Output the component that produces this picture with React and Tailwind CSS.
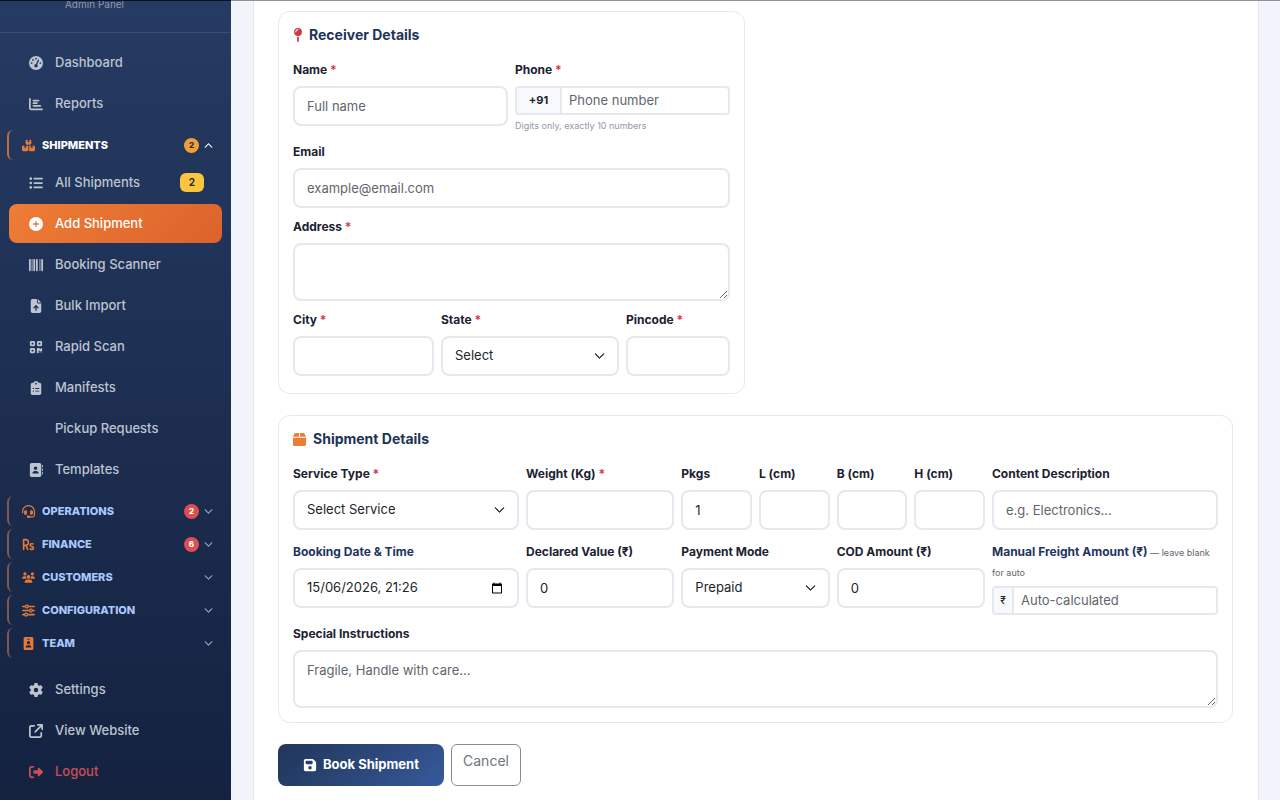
import React from 'react';
import {
  FaGaugeHigh,
  FaChartBar,
  FaBoxesStacked,
  FaListUl,
  FaCirclePlus,
  FaBarcode,
  FaFileArrowUp,
  FaQrcode,
  FaClipboardList,
  FaAddressBook,
  FaHeadset,
  FaRupeeSign,
  FaUsers,
  FaSliders,
  FaIdBadge,
  FaGear,
  FaArrowUpRightFromSquare,
  FaRightFromBracket,
  FaMapPin,
  FaBox,
  FaFloppyDisk,
} from 'react-icons/fa6';
import { BsChevronDown, BsChevronUp } from 'react-icons/bs';

const mainLinks = [
  { label: 'Dashboard', icon: FaGaugeHigh },
  { label: 'Reports', icon: FaChartBar },
];

const shipmentLinks = [
  { label: 'All Shipments', icon: FaListUl, badge: 2 },
  { label: 'Add Shipment', icon: FaCirclePlus, active: true },
  { label: 'Booking Scanner', icon: FaBarcode },
  { label: 'Bulk Import', icon: FaFileArrowUp },
  { label: 'Rapid Scan', icon: FaQrcode },
  { label: 'Manifests', icon: FaClipboardList },
  { label: 'Pickup Requests' },
  { label: 'Templates', icon: FaAddressBook },
];

const sections = [
  { label: 'Operations', icon: FaHeadset, count: 2 },
  { label: 'Finance', icon: FaRupeeSign, count: 6 },
  { label: 'Customers', icon: FaUsers },
  { label: 'Configuration', icon: FaSliders },
  { label: 'Team', icon: FaIdBadge },
];

const footerLinks = [
  { label: 'Settings', icon: FaGear },
  { label: 'View Website', icon: FaArrowUpRightFromSquare },
  { label: 'Logout', icon: FaRightFromBracket, danger: true },
];

function NavLink({ label, icon: Icon, badge, active, danger }) {
  let color = 'text-[#bdc4d0]';
  if (active) color = 'text-white bg-linear-135 from-[#ee7d36] to-[#dc622b]';
  if (danger) color = 'text-[#c94f55]';

  return (
    <li>
      <a
        href="#"
        aria-current={active ? 'page' : undefined}
        className={`flex items-center h-[39px] pl-[19px] pr-[18px] rounded-lg text-[13px] font-medium ${color}`}
      >
        <span className="w-[15px] mr-3 flex justify-center">{Icon && <Icon size={14} />}</span>
        <span className="flex-1">{label}</span>
        {badge && (
          <span className="w-6 h-[19px] rounded-md bg-[#fbc53d] text-[#1f2937] text-[10px] font-bold flex items-center justify-center">
            {badge}
          </span>
        )}
      </a>
    </li>
  );
}

function SectionButton({ label, icon: Icon, count, open }) {
  const Chevron = open ? BsChevronUp : BsChevronDown;

  return (
    <button
      type="button"
      aria-expanded={!!open}
      className={`flex items-center w-full h-[30px] pl-3 pr-[11px] border-l-2 rounded-md text-[11px] font-extrabold uppercase ${
        open ? 'text-white border-[#c06c45]' : 'text-[#a9c8fb] border-[#7f5650]'
      }`}
    >
      <span className="w-[14px] mr-[7px] flex justify-center text-[#e57a38]">
        <Icon size={13} />
      </span>
      <span className="flex-1 text-left">{label}</span>
      {count && (
        <span
          className={`w-[15px] h-[15px] mr-[5px] rounded-full flex items-center justify-center text-[8px] ${
            open ? 'bg-[#f0a136] text-[#1f2937]' : 'bg-[#dc4f53] text-white'
          }`}
        >
          {count}
        </span>
      )}
      <Chevron size={9} strokeWidth={1} className={open ? 'text-white' : 'text-[#a3adbf]'} />
    </button>
  );
}

function Sidebar() {
  return (
    <aside className="w-[231px] shrink-0 border-t border-black/50 bg-linear-to-b from-[#263b63] to-[#142240] overflow-hidden">
      <div className="h-8 pr-[42px] border-b border-white/10 text-center text-[10px] leading-[6px] text-[#8e99ad]">
        Admin Panel
      </div>
      <nav>
        <ul className="mt-[10px] mx-[9px] flex flex-col gap-[2px]">
          {mainLinks.map((link) => (
            <NavLink key={link.label} {...link} />
          ))}
        </ul>

        <div className="mt-[7px] mx-[7px]">
          <SectionButton label="Shipments" icon={FaBoxesStacked} count={2} open />
        </div>
        <ul className="mt-[3px] mx-[9px] flex flex-col gap-[2px]">
          {shipmentLinks.map((link) => (
            <NavLink key={link.label} {...link} />
          ))}
        </ul>

        <div className="mt-[7px] mx-[7px] flex flex-col gap-[3px]">
          {sections.map((section) => (
            <SectionButton key={section.label} {...section} />
          ))}
        </div>

        <ul className="mt-3 mx-[9px] flex flex-col gap-[2px]">
          {footerLinks.map((link) => (
            <NavLink key={link.label} {...link} />
          ))}
        </ul>
      </nav>
    </aside>
  );
}

const controlClass =
  'block w-full rounded-lg border-2 border-[#e6e8ee] bg-white px-3 text-[13px] text-[#212529] placeholder:text-[#5f666d] outline-none';

function Field({ id, label, required, accent, className, children }) {
  return (
    <div className={className}>
      <label
        htmlFor={id}
        className={`block mb-1.5 text-[12px] leading-5 font-bold whitespace-nowrap ${accent ? 'text-[#1e3560]' : 'text-[#1b2230]'}`}
      >
        {label}
        {required && <span className="text-[#dc3545]"> *</span>}
      </label>
      {children}
    </div>
  );
}

function TextField({ id, placeholder, defaultValue, ...field }) {
  return (
    <Field id={id} {...field}>
      <input id={id} type="text" placeholder={placeholder} defaultValue={defaultValue} className={`${controlClass} h-10`} />
    </Field>
  );
}

function SelectField({ id, options, ...field }) {
  return (
    <Field id={id} {...field}>
      <div className="relative">
        <select id={id} className={`${controlClass} h-10 appearance-none`}>
          {options.map((option) => (
            <option key={option}>{option}</option>
          ))}
        </select>
        <BsChevronDown
          size={11}
          strokeWidth={1}
          className="absolute right-[14px] top-1/2 -translate-y-1/2 pointer-events-none text-[#212529]"
        />
      </div>
    </Field>
  );
}

function TextareaField({ id, placeholder, ...field }) {
  return (
    <Field id={id} {...field}>
      <textarea id={id} placeholder={placeholder} className={`${controlClass} h-[58px] py-2 leading-5 resize-y`} />
    </Field>
  );
}

function InputGroup({ id, prefix, prefixClass, placeholder }) {
  return (
    <div className="flex h-[29px] rounded-sm border-2 border-[#e6e8ee] bg-white overflow-hidden">
      <span className={`flex items-center justify-center border-r-2 border-[#e6e8ee] bg-[#f8f9fc] text-[#212529] ${prefixClass}`}>
        {prefix}
      </span>
      <input
        id={id}
        type="text"
        placeholder={placeholder}
        className="flex-1 min-w-0 px-[7px] text-[13px] text-[#212529] placeholder:text-[#5f666d] outline-none"
      />
    </div>
  );
}

function CardTitle({ icon, children }) {
  return (
    <h2 className="flex items-center mb-4 text-[14px] leading-[18px] font-bold text-[#1e3358]">
      {icon}
      {children}
    </h2>
  );
}

function ReceiverCard() {
  return (
    <section className="w-[467px] rounded-xl border border-[#e6e8ee] px-[14px] pt-[14px] pb-[17px]">
      <CardTitle icon={<FaMapPin size={14} className="-ml-[2px] mr-1 text-[#d03a47]" />}>Receiver Details</CardTitle>
      <div className="grid grid-cols-12 gap-x-[7px] gap-y-[9px]">
        <TextField id="name" label="Name" required placeholder="Full name" className="col-span-6" />
        <Field id="phone" label="Phone" required className="col-span-6">
          <InputGroup id="phone" prefix="+91" prefixClass="w-[45px] text-[11px] font-bold" placeholder="Phone number" />
          <p className="mt-[3px] text-[9px] leading-[15px] text-[#9299a5]">Digits only, exactly 10 numbers</p>
        </Field>
        <TextField id="email" label="Email" placeholder="example@email.com" className="col-span-12" />
        <TextareaField id="address" label="Address" required className="col-span-12" />
        <TextField id="city" label="City" required className="col-span-4" />
        <SelectField id="state" label="State" required options={['Select']} className="col-span-5" />
        <TextField id="pincode" label="Pincode" required className="col-span-3" />
      </div>
    </section>
  );
}

function DateField() {
  return (
    <Field id="booking-date" label="Booking Date & Time" accent className="col-span-3">
      <div className={`${controlClass} flex items-center h-10`}>
        <input
          id="booking-date"
          type="text"
          defaultValue="15/06/2026, 21:26"
          className="flex-1 min-w-0 text-[13px] outline-none"
        />
        <button type="button" aria-label="Open calendar" className="mr-[2px]">
          <svg width="12" height="12" viewBox="0 0 24 24" fill="currentColor" className="text-black">
            <path d="M20 3h-1V1h-2v2H7V1H5v2H4c-1.1 0-2 .9-2 2v16c0 1.100.9 2 2 2h16c1.100 0 2-.9 2-2V5c0-1.100-.9-2-2-2zm0 18H4V8h16v13z" />
          </svg>
        </button>
      </div>
    </Field>
  );
}

function ShipmentCard() {
  return (
    <section className="mt-[21px] rounded-xl border border-[#e6e8ee] p-[14px]">
      <CardTitle icon={<FaBox size={15} className="-ml-px mr-1.5 text-[#e97e37]" />}>Shipment Details</CardTitle>
      <div className="flex flex-col gap-[9px]">
        <div className="grid grid-cols-12 gap-x-[7px]">
          <SelectField id="service" label="Service Type" required options={['Select Service']} className="col-span-3" />
          <TextField id="weight" label="Weight (Kg)" required className="col-span-2" />
          <TextField id="pkgs" label="Pkgs" defaultValue="1" />
          <TextField id="length" label="L (cm)" />
          <TextField id="breadth" label="B (cm)" />
          <TextField id="height" label="H (cm)" />
          <TextField id="content" label="Content Description" placeholder="e.g. Electronics..." className="col-span-3" />
        </div>

        <div className="grid grid-cols-12 gap-x-[7px] mt-[3px]">
          <DateField />
          <TextField id="declared" label="Declared Value (₹)" defaultValue="0" className="col-span-2" />
          <SelectField id="payment" label="Payment Mode" options={['Prepaid']} className="col-span-2" />
          <TextField id="cod" label="COD Amount (₹)" defaultValue="0" className="col-span-2" />
          <div className="col-span-3">
            <label htmlFor="freight" className="block mb-1 text-[12px] leading-5 font-bold text-[#1e3560]">
              Manual Freight Amount (₹)
              <small className="text-[9px] leading-none font-normal text-[#5f666d]"> — leave blank for auto</small>
            </label>
            <InputGroup id="freight" prefix="₹" prefixClass="w-5 text-[10px] font-medium" placeholder="Auto-calculated" />
          </div>
        </div>

        <TextareaField id="instructions" label="Special Instructions" placeholder="Fragile, Handle with care..." />
      </div>
    </section>
  );
}

export default function App() {
  return (
    <div className="flex min-h-screen bg-[#f1f4fa] font-[Inter,sans-serif]">
      <Sidebar />
      <main className="flex-1 min-w-0 flex border-t border-[#929295] pl-[22px] pr-[21px]">
        <form className="flex-1 min-w-0 bg-white border-x border-[#e6e8ee] pl-6 pr-[25px] pt-[10px]">
          <ReceiverCard />
          <ShipmentCard />
          <div className="mt-[21px] flex gap-[7px]">
            <button
              type="submit"
              className="flex items-center justify-center h-[42px] w-[166px] rounded-lg bg-linear-135 from-[#203659] to-[#37599b] text-white text-[13px] font-bold"
            >
              <FaFloppyDisk size={14} className="mr-1.5" />
              Book Shipment
            </button>
            <button
              type="button"
              className="flex items-start justify-center h-[42px] w-[70px] pt-[5px] rounded-md border border-[#868c93] text-[#6c757d] text-[14px] leading-[22px]"
            >
              Cancel
            </button>
          </div>
        </form>
      </main>
    </div>
  );
}
